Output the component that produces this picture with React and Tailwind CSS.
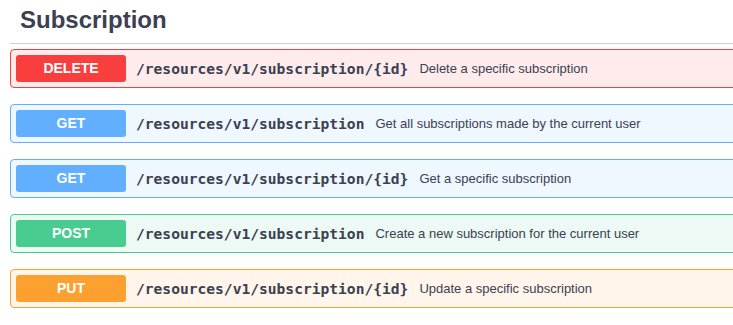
const ops = [
  {
    method: 'DELETE',
    path: '/resources/v1/subscription/{id}',
    summary: 'Delete a specific subscription',
    box: 'border-[#f93e3e] bg-[#feebeb]',
    badge: 'bg-[#f93e3e]',
  },
  {
    method: 'GET',
    path: '/resources/v1/subscription',
    summary: 'Get all subscriptions made by the current user',
    box: 'border-[#61affe] bg-[#eff7ff]',
    badge: 'bg-[#61affe]',
  },
  {
    method: 'GET',
    path: '/resources/v1/subscription/{id}',
    summary: 'Get a specific subscription',
    box: 'border-[#61affe] bg-[#eff7ff]',
    badge: 'bg-[#61affe]',
  },
  {
    method: 'POST',
    path: '/resources/v1/subscription',
    summary: 'Create a new subscription for the current user',
    box: 'border-[#49cc90] bg-[#edf9f4]',
    badge: 'bg-[#49cc90]',
  },
  {
    method: 'PUT',
    path: '/resources/v1/subscription/{id}',
    summary: 'Update a specific subscription',
    box: 'border-[#fca130] bg-[#fff5ea]',
    badge: 'bg-[#fca130]',
  },
]

export default function App() {
  return (
    <div className="h-[325px] w-[733px] overflow-hidden bg-white font-['Liberation_Sans',Arial,sans-serif] text-[#3b4151]">
      <div className="w-[780px] pl-[10px]">
        <h2 className="h-[44px] border-b border-[#cfcfcf] pl-[10px] pt-[4px] text-[24px] font-bold leading-[32px]">
          Subscription
        </h2>
        <div className="pt-[5px]">
          {ops.map((op, i) => (
            <div
              key={i}
              className={`mb-[16px] flex h-[39px] items-center rounded-[4px] border px-[5px] ${op.box}`}
            >
              <span
                className={`flex h-[27px] w-[110px] shrink-0 items-center justify-center rounded-[3px] text-[14px] font-bold text-white ${op.badge}`}
              >
                {op.method}
              </span>
              <span className="ml-[10px] font-['DejaVu_Sans_Mono',monospace] text-[14.6px] font-bold text-[#3b4151]">
                {op.path}
              </span>
              <span className="ml-[11px] text-[13px] text-[#3b4151]">{op.summary}</span>
            </div>
          ))}
        </div>
      </div>
    </div>
  )
}
